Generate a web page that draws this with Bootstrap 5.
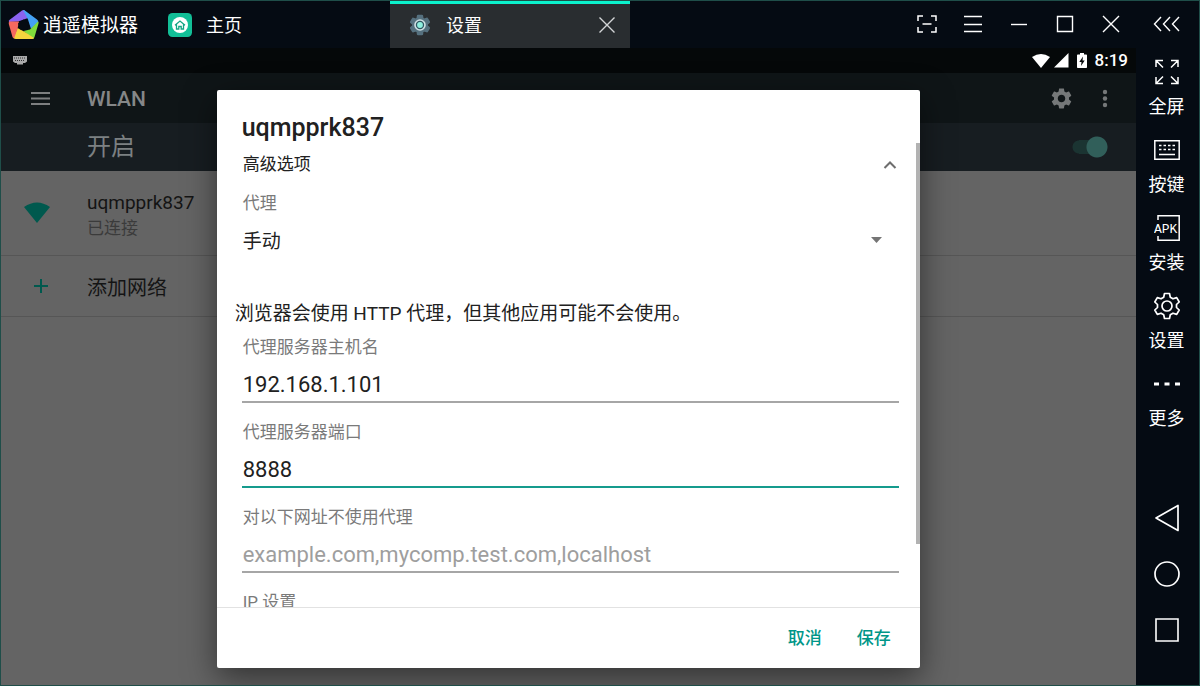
<!DOCTYPE html>
<html lang="zh-CN">
<head>
<meta charset="utf-8">
<meta name="viewport" content="width=device-width, initial-scale=1">
<title>逍遥模拟器</title>
<link href="https://cdn.jsdelivr.net/npm/bootstrap@5.3.0/dist/css/bootstrap.min.css" rel="stylesheet">
<style>
  :root { --accent: #009688; --frame: #050b13; --ui: "Noto Sans CJK SC", sans-serif; }
  body { font-family: Roboto, "Noto Sans CJK SC", sans-serif; color: #212121; }
  button { background: none; border: 0; padding: 0; color: inherit; }
  svg { display: block; flex: none; }
  .frame { background: var(--frame); border: 1px solid #1f4e49; color: #fff; }
  .chrome { font-family: var(--ui); }

  /* window title bar */
  .titlebar { height: 47px; }
  .brand { width: 149px; padding-left: 7px; gap: 4px; font-size: 19px; white-space: nowrap; }
  .app-tab { width: 240px; padding: 0 12px 0 18px; gap: 14px; font-size: 18px; color: #fff; text-decoration: none; }
  .app-tab.current { background: #292d30; box-shadow: inset 0 3px #0bf2cc; }
  .win-btn { width: 46px; height: 46px; }
  .rail-btn { width: 65px; }
  .rail { width: 63px; }

  /* side rail */
  .rail { padding: 8px 2px 27px 0; }
  .rail-item { height: 78px; font-size: 18px; line-height: 24px; gap: 5px; }
  .rail-icon { height: 32px; }
  .nav-key { height: 56px; }

  /* android screen */
  .device { background: #646464; min-width: 0; }
  .statusbar { height: 25px; background: #050809; padding: 0 8px 0 11px; font-size: 17px; font-weight: 500; }
  .appbar { height: 50px; background: #0f1517; color: #858788; padding-right: 24px; }
  .switchbar { height: 48px; background: #171d21; color: #7c8082; padding-right: 28px; }
  .lead-col { width: 86px; padding-left: 23px; }
  .appbar-title { font-size: 21px; font-weight: 500; padding-top: 3px; }
  .on-text { font-size: 24px; line-height: 32px; }
  .wlan-switch { appearance: none; width: 36px; height: 22px; margin: 0; border-radius: 11px;
    background: radial-gradient(circle at 25px 11px, #315f5a 10px, transparent 11px), linear-gradient(#1b3432, #1b3432) 7px 4px / 20px 14px no-repeat,
      radial-gradient(circle at 7px 11px, #1b3432 6px, transparent 7px); }
  .net-row { border-bottom: 1px solid #565656; color: #141414; }
  .net-row.joined { height: 85px; }
  .net-row.add { height: 61px; }
  .net-text { padding-top: 3px; }
  .net-name { font-size: 19px; line-height: 26px; }
  .net-state { font-size: 17px; line-height: 24px; color: #3b3b3b; }
  .add-text { font-size: 20px; line-height: 28px; }

  /* dialog */
  .scrim { top: 25px; padding: 17px 0; }
  .sheet { width: 62%; background: #fff; border-radius: 2px; box-shadow: 0 10px 32px rgba(0,0,0,.5); color: #212121; }
  .sheet-title { height: 53px; padding: 23px 25px 0; font-size: 25px; line-height: 30px; font-weight: 500; margin: 0; }
  .sheet-body { min-height: 0; overflow-y: auto; scrollbar-width: none; padding: 2px 21px 0 25px; }
  .sheet-body::-webkit-scrollbar { display: none; }
  .scroll-thumb { top: 53px; right: 0; width: 4px; height: 401px; background: #b2b2b2; }
  .advanced { height: 40px; padding: 0 2px 0 1px; font-size: 17px; }
  .field-label { font-size: 17px; line-height: 24px; color: #7a7a7a; padding-left: 1px; display: block; }
  .proxy-field { padding-top: 6px; }
  .proxy-field .field-label { margin-bottom: 6px; }
  .proxy-select { appearance: none; width: 100%; height: 42px; border: 0; background: none; font-size: 19px; color: #212121; padding: 0 0 0 1px; outline: 0; }
  .caret { right: 17px; top: 16px; pointer-events: none; }
  .notice { font-size: 19px; line-height: 30px; margin: 36px 0 6px -7px; white-space: nowrap; }
  .text-line { width: 100%; height: 44px; border: 0; border-bottom: 2px solid #a6a6a6; border-radius: 0; padding: 8px 0 0 1px; font-size: 22px; color: #212121; outline: 0; background: none; display: block; }
  .text-line::placeholder { color: #9e9e9e; opacity: 1; }
  .text-line.active { border-color: #159b8d; }
  .field { margin-bottom: 17px; }
  .sheet-actions { height: 61px; border-top: 1px solid #e2e2e2; padding: 2px 19px 0 0; gap: 14px; }
  .sheet-btn { width: 55px; height: 40px; font-size: 17px; font-weight: 500; color: var(--accent); }
</style>
</head>
<body>
<svg width="0" height="0" class="position-absolute" aria-hidden="true">
  <symbol id="gear" viewBox="0 0 24 24"><path fill-rule="evenodd" d="M19.14 12.94c.04-.3.06-.61.06-.94 0-.32-.02-.64-.07-.94l2.03-1.58c.18-.14.23-.41.12-.61l-1.92-3.32c-.12-.22-.37-.29-.59-.22l-2.39.96c-.5-.38-1.03-.7-1.62-.94L14.4 2.81c-.04-.24-.24-.41-.48-.41h-3.84c-.24 0-.43.17-.47.41L9.25 5.35C8.66 5.59 8.12 5.92 7.63 6.29L5.24 5.33c-.22-.08-.47 0-.59.22L2.74 8.87c-.12.21-.08.47.12.61l2.03 1.58C4.84 11.36 4.8 11.69 4.8 12s.02.64.07.94l-2.03 1.58c-.18.14-.23.41-.12.61l1.92 3.32c.12.22.37.29.59.22l2.39-.96c.5.38 1.03.7 1.62.94l.36 2.54c.05.24.24.41.48.41h3.84c.24 0 .44-.17.47-.41l.36-2.54c.59-.24 1.13-.56 1.62-.94l2.39.96c.22.08.47 0 .59-.22l1.92-3.32c.12-.22.07-.47-.12-.61L19.14 12.94zM12 15.6c-1.98 0-3.6-1.62-3.6-3.6s1.62-3.6 3.6-3.6 3.6 1.62 3.6 3.6-1.62 3.6-3.6 3.6z"/></symbol>
</svg>

<div class="frame vh-100 d-flex flex-column overflow-hidden">
  <header class="titlebar chrome d-flex flex-shrink-0">
    <div class="brand d-flex align-items-center flex-shrink-0">
      <svg width="31" height="31" viewBox="0 0 31 31" aria-hidden="true">
        <path fill="#8a63f0" d="M1 13Q0 11.500 2 10.500L14 1.500Q16 .5 17 2L20 9 10 12.500Z"/>
        <path fill="#45a2f5" d="M15 1Q16.500 1 17.500 2L29 10.500Q31 12 30 13.500L23 20 20 10.500Z"/>
        <path fill="#7fdc3c" d="M30 12.500Q31 13 30.500 14.500L26.500 28Q26 30 24.500 30L15.500 22 22 20.500Z"/>
        <path fill="#f4d53e" d="M26 29Q25.500 30 24 30H8Q6 30 5.500 28.500L9.500 19 16 22.500Z"/>
        <path fill="#f4695f" d="M6 29.500Q5 29 4.500 28L.8 15Q.3 13 1.500 12.500H11L9.500 20Z"/>
        <path fill="#050b13" d="M15.500 10.500 21 14.500 19 20.500H12L10 14.500Z"/>
      </svg>
      <span>逍遥模拟器</span>
    </div>
    <nav class="d-flex flex-shrink-0">
      <a href="#" class="app-tab d-flex align-items-center">
        <svg width="24" height="24" viewBox="0 0 24 24" aria-hidden="true">
          <rect width="24" height="24" rx="4.500" fill="#12bf97"/><circle cx="12" cy="12" r="8" fill="#fff"/>
          <path d="M7 12.200 12 8l5 4.200M8.500 11.500V16h2.300v-2.500h2.400V16h2.300v-4.500" fill="none" stroke="#12a584" stroke-width="1.300"/>
        </svg>
        <span>主页</span>
      </a>
      <div class="app-tab current d-flex align-items-center">
        <svg width="24" height="24" viewBox="0 0 24 24" aria-hidden="true">
          <use href="#gear" fill="#56717f" stroke="#56717f" stroke-width="1.500" stroke-linejoin="round"/>
          <circle cx="12" cy="12" r="5" fill="#2f5862" stroke="#cfe0e4" stroke-width="1.600"/><circle cx="12" cy="12" r="2.900" fill="#8ff0df"/>
        </svg>
        <span class="flex-grow-1">设置</span>
        <button aria-label="关闭标签"><svg width="22" height="22" viewBox="0 0 22 22"><path d="M3.500 3.500l15 15M18.500 3.500l-15 15" stroke="#d4d6d7" stroke-width="1.400"/></svg></button>
      </div>
    </nav>
    <div class="d-flex ms-auto">
      <button class="win-btn d-flex align-items-center justify-content-center" aria-label="截图"><svg width="20" height="18" viewBox="0 0 20 18"><path d="M1 6V1h5M14 1h5v5M19 12v5h-5M6 17H1v-5M5.500 9h9" fill="none" stroke="#fff" stroke-width="1.500"/></svg></button>
      <button class="win-btn d-flex align-items-center justify-content-center" aria-label="菜单"><svg width="20" height="18" viewBox="0 0 20 18"><path d="M1 1.500h18M1 9.500h18M1 16.500h18" stroke="#fff" stroke-width="1.300"/></svg></button>
      <button class="win-btn d-flex align-items-center justify-content-center" aria-label="最小化"><svg width="18" height="18" viewBox="0 0 18 18"><path d="M1 9.500h16" stroke="#fff" stroke-width="1.400"/></svg></button>
      <button class="win-btn d-flex align-items-center justify-content-center" aria-label="最大化"><svg width="18" height="18" viewBox="0 0 18 18"><path d="M1.500 1.500h15v15h-15z" fill="none" stroke="#fff" stroke-width="1.400"/></svg></button>
      <button class="win-btn d-flex align-items-center justify-content-center" aria-label="关闭"><svg width="18" height="18" viewBox="0 0 18 18"><path d="M1 1l16 16M17 1L1 17" stroke="#fff" stroke-width="1.400"/></svg></button>
      <button class="win-btn rail-btn d-flex align-items-center justify-content-center" aria-label="收起侧栏"><svg width="28" height="16" viewBox="0 0 28 16"><path d="M8 1L1.500 8 8 15M17 1l-6.500 7 6.500 7M26 1l-6.500 7 6.500 7" fill="none" stroke="#fff" stroke-width="1.400"/></svg></button>
    </div>
  </header>

  <div class="d-flex flex-grow-1 overflow-hidden">
    <main class="device position-relative flex-grow-1">
      <div class="statusbar d-flex align-items-center gap-1">
        <svg class="me-auto" width="16" height="10" viewBox="0 0 16 10" aria-hidden="true"><path d="M1 0h14v5.500L13 7h-2v1.500H5V7H3L1 5.500z" fill="#aaa"/><path d="M2 2h12M3 4.500h10" stroke="#111" stroke-width=".8" stroke-dasharray="1 1"/></svg>
        <svg width="18" height="16" viewBox="0 0 18 16" aria-hidden="true"><path d="M0 4Q9-2 18 4L9 15z" fill="#fff"/></svg>
        <svg width="15" height="15" viewBox="0 0 15 15" aria-hidden="true"><path d="M14.500 0v14.500H0z" fill="#fff"/></svg>
        <svg class="mx-1" width="10" height="16" viewBox="0 0 10 16" aria-hidden="true"><path d="M3 0h4v1.500h2.200q.8 0 .8.800v12q0 .7-.8.700H.800Q0 15 0 14.300v-12q0-.8.800-.8H3z" fill="#fff"/><path d="M6 3.500 2.300 9h2.200L4 13l3.700-5.500H5.500z" fill="#050809"/></svg>
        <span>8:19</span>
      </div>
      <div class="appbar d-flex align-items-center">
        <button class="lead-col" aria-label="导航菜单"><svg class="ms-1" width="26" height="16" viewBox="0 0 26 16"><path d="M3 3h19M3 8.500h19M3 14h19" stroke="#7d7f80" stroke-width="2"/></svg></button>
        <h1 class="appbar-title m-0 me-auto">WLAN</h1>
        <button class="me-4" aria-label="高级设置"><svg width="25" height="25" fill="#757879"><use href="#gear"/></svg></button>
        <button aria-label="更多选项"><svg width="14" height="20" viewBox="0 0 14 20" fill="#757879"><circle cx="7" cy="4" r="2.200"/><circle cx="7" cy="10.500" r="2.200"/><circle cx="7" cy="17" r="2.200"/></svg></button>
      </div>
      <div class="switchbar d-flex align-items-center">
        <span class="lead-col"></span>
        <label class="on-text me-auto" for="wlan">开启</label>
        <input id="wlan" class="wlan-switch" type="checkbox" role="switch" checked>
      </div>
      <div class="net-row joined d-flex align-items-center">
        <div class="lead-col"><svg width="26" height="22" viewBox="0 0 26 22"><path d="M0 5Q13-4 26 5L13 21z" fill="#00594e"/></svg></div>
        <div class="net-text"><div class="net-name">uqmpprk837</div><div class="net-state">已连接</div></div>
      </div>
      <div class="net-row add d-flex align-items-center">
        <div class="lead-col"><svg class="ms-2" width="18" height="18" viewBox="0 0 18 18"><path d="M9 2v14M2 9h14" stroke="#00594e" stroke-width="2"/></svg></div>
        <div class="net-text add-text">添加网络</div>
      </div>

      <div class="scrim position-absolute start-0 end-0 bottom-0 d-flex justify-content-center">
        <form class="sheet position-relative d-flex flex-column" role="dialog" aria-labelledby="sheet-title">
          <h2 id="sheet-title" class="sheet-title flex-shrink-0">uqmpprk837</h2>
          <div class="sheet-body flex-grow-1">
            <button type="button" class="advanced w-100 d-flex align-items-center justify-content-between">
              <span>高级选项</span>
              <svg width="14" height="10" viewBox="0 0 14 10"><path d="M1.500 8 7 2.500 12.500 8" fill="none" stroke="#6e6e6e" stroke-width="2"/></svg>
            </button>
            <div class="proxy-field">
              <label class="field-label" for="proxy">代理</label>
              <div class="position-relative">
                <select id="proxy" class="proxy-select"><option>手动</option></select>
                <svg class="caret position-absolute" width="11" height="6" viewBox="0 0 11 6"><path d="M0 0h11L5.500 6z" fill="#757575"/></svg>
              </div>
            </div>
            <p class="notice">浏览器会使用 HTTP 代理，但其他应用可能不会使用。</p>
            <div class="field">
              <label class="field-label" for="host">代理服务器主机名</label>
              <input id="host" class="text-line" type="text" value="192.168.1.101">
            </div>
            <div class="field">
              <label class="field-label" for="port">代理服务器端口</label>
              <input id="port" class="text-line active" type="text" value="8888">
            </div>
            <div class="field">
              <label class="field-label" for="bypass">对以下网址不使用代理</label>
              <input id="bypass" class="text-line" type="text" placeholder="example.com,mycomp.test.com,localhost">
            </div>
            <div class="field-label">IP 设置</div>
          </div>
          <div class="scroll-thumb position-absolute"></div>
          <div class="sheet-actions d-flex align-items-center justify-content-end flex-shrink-0">
            <button type="button" class="sheet-btn">取消</button>
            <button type="button" class="sheet-btn">保存</button>
          </div>
        </form>
      </div>
    </main>

    <aside class="rail chrome d-flex flex-column flex-shrink-0">
      <button class="rail-item d-flex flex-column align-items-center">
        <span class="rail-icon d-flex align-items-center"><svg width="24" height="26" viewBox="0 0 24 26"><path d="M1 8V1.500h7M1 1.500l7 7M16 1.500h7V8M23 1.500l-7 7M1 18v6.500h7M1 24.500l7-7M16 24.500h7V18M23 24.500l-7-7" fill="none" stroke="#fff" stroke-width="1.500"/></svg></span>全屏
      </button>
      <button class="rail-item d-flex flex-column align-items-center">
        <span class="rail-icon d-flex align-items-center"><svg width="26" height="20" viewBox="0 0 26 20"><path d="M.8.800h24.400v18.400H.8z" fill="none" stroke="#fff" stroke-width="1.500"/><path d="M5 5.500h16M5 9.500h16" stroke="#fff" stroke-width="1.600" stroke-dasharray="2.500 2"/><path d="M5 14.500h16" stroke="#fff" stroke-width="1.500"/></svg></span>按键
      </button>
      <button class="rail-item d-flex flex-column align-items-center">
        <span class="rail-icon d-flex align-items-center"><svg width="26" height="26" viewBox="0 0 26 26"><path d="M4 5V.800h21.200v24.400H4V21" fill="none" stroke="#fff" stroke-width="1.500"/><text x="0" y="18" font-family="Liberation Mono, monospace" font-size="13" fill="#fff">APK</text></svg></span>安装
      </button>
      <button class="rail-item d-flex flex-column align-items-center">
        <span class="rail-icon d-flex align-items-center"><svg width="28" height="28" viewBox="0 0 28 28" fill="none" stroke="#fff" stroke-width="1.700" stroke-linejoin="round"><path d="M11.500 1.500h5l.8 3.700 2.700 1.600 3.700-1.200 2.500 4.400-2.700 2.500v3l2.700 2.500-2.500 4.400-3.700-1.200-2.700 1.600-.8 3.700h-5l-.8-3.700L8 21.200l-3.700 1.200L1.800 18l2.700-2.500v-3L1.800 10l2.500-4.400L8 6.800l2.700-1.600z"/><circle cx="14" cy="14" r="5"/></svg></span>设置
      </button>
      <button class="rail-item d-flex flex-column align-items-center">
        <span class="rail-icon d-flex align-items-center"><svg width="26" height="4" viewBox="0 0 26 4"><path d="M0 .500h5v3H0zM10.500.500h5v3h-5zM21 .500h5v3h-5z" fill="#fff"/></svg></span>更多
      </button>
      <div class="mt-auto d-flex flex-column">
        <button class="nav-key d-flex align-items-center justify-content-center" aria-label="返回"><svg width="26" height="28" viewBox="0 0 26 28"><path d="M24 1.500v25L2 14z" fill="none" stroke="#fff" stroke-width="1.700" stroke-linejoin="round"/></svg></button>
        <button class="nav-key d-flex align-items-center justify-content-center" aria-label="主屏幕"><svg width="26" height="26" viewBox="0 0 26 26"><circle cx="13" cy="13" r="12" fill="none" stroke="#fff" stroke-width="1.700"/></svg></button>
        <button class="nav-key d-flex align-items-center justify-content-center" aria-label="最近任务"><svg width="24" height="24" viewBox="0 0 24 24"><path d="M1 1h22v22H1z" fill="none" stroke="#fff" stroke-width="1.600"/></svg></button>
      </div>
    </aside>
  </div>
</div>
<script src="https://cdn.jsdelivr.net/npm/bootstrap@5.3.0/dist/js/bootstrap.bundle.min.js"></script>
</body>
</html>
